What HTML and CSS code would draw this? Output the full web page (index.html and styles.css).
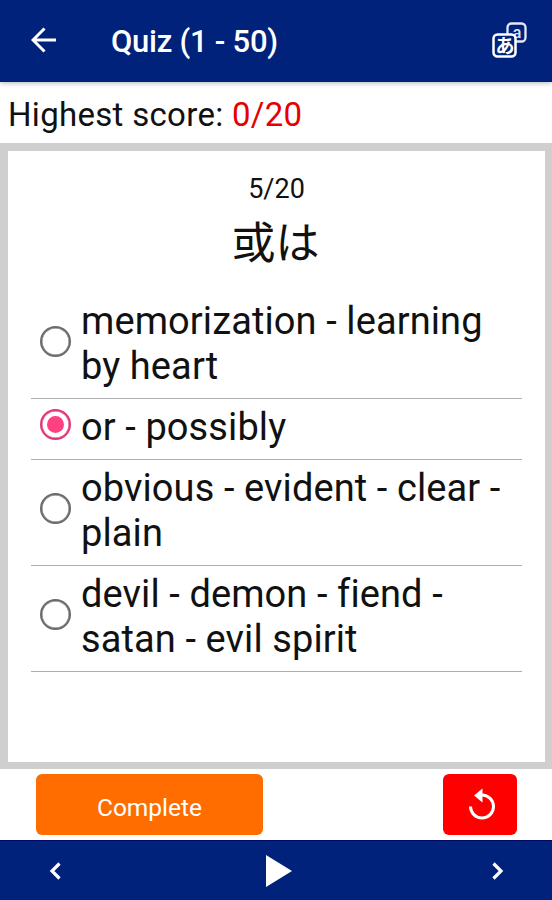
FILE: index.html
```html
<!DOCTYPE html>
<html lang="en">
<head>
<meta charset="utf-8">
<title>Quiz</title>
<link rel="stylesheet" href="styles.css">
</head>
<body>
<header class="topbar">
  <svg class="back" viewBox="0 0 26 26"><path d="M25 13H2M13.500 1.500 2 13 13.500 24.500" fill="none" stroke="#fff" stroke-width="3"/></svg>
  <h1 class="title">Quiz (1 - 50)</h1>
  <svg class="translate" viewBox="0 0 36 36">
    <rect x="15.500" y="1.500" width="18" height="18" rx="4" fill="none" stroke="#e4e8fa" stroke-width="2.300"/>
    <text x="25" y="15.500" class="latin">a</text>
    <rect x="1.500" y="12.500" width="22" height="22" rx="4" fill="#00227b" stroke="#fff" stroke-width="2.500"/>
    <text x="13" y="30.500" class="kana">あ</text>
  </svg>
</header>
<p class="highscore">Highest score: <span class="score">0/20</span></p>
<main class="card">
  <div class="progress">5/20</div>
  <div class="word" lang="ja">或は</div>
  <ul class="options">
    <li class="option"><span class="radio"></span><span class="label">memorization - learning<br>by heart</span></li>
    <li class="option"><span class="radio checked"></span><span class="label">or - possibly</span></li>
    <li class="option"><span class="radio"></span><span class="label">obvious - evident - clear -<br>plain</span></li>
    <li class="option"><span class="radio"></span><span class="label">devil - demon - fiend -<br>satan - evil spirit</span></li>
  </ul>
</main>
<div class="actions">
  <button class="complete">Complete</button>
  <button class="reset" aria-label="Reset">
    <svg class="reset-icon" viewBox="0 0 30 32"><path d="M3.500 18.500A11.500 11.500 0 1 0 15 7H13" fill="none" stroke="#fff" stroke-width="3"/><path d="M15.500 .5V14.500L7 7.500Z" fill="#fff"/></svg>
  </button>
</div>
<nav class="bottombar">
  <svg class="chevron" viewBox="0 0 12 18"><path d="M10.500 1.500 3 9l7.500 7.500" fill="none" stroke="#fff" stroke-width="3.200"/></svg>
  <svg class="play" viewBox="0 0 26 32"><path d="M0 0 26 16 0 32Z" fill="#fff"/></svg>
  <svg class="chevron" viewBox="0 0 12 18"><path d="M1.500 1.500 9 9l-7.500 7.500" fill="none" stroke="#fff" stroke-width="3.200"/></svg>
</nav>
</body>
</html>
```
FILE: styles.css
```css
* { box-sizing: border-box; }
body {
  margin: 0;
  height: 900px;
  display: flex;
  flex-direction: column;
  background: #fff;
  color: #111;
  font-family: Roboto, "Noto Sans CJK JP", sans-serif;
  overflow: hidden;
}
.topbar {
  height: 82px;
  flex: none;
  display: flex;
  align-items: center;
  padding: 0 24px 2px 31px;
  background: #00227b;
  color: #fff;
  box-shadow: 0 1px 5px rgba(0, 0, 0, .3);
}
.back { width: 26px; height: 26px; }
.title {
  margin: 3px auto 0 54px;
  font-size: 31px;
  font-weight: 500;
  letter-spacing: -.25px;
  line-height: 40px;
  white-space: nowrap;
}
.translate { width: 36px; height: 36px; }
.latin, .kana { fill: #fff; text-anchor: middle; font-weight: 500; }
.latin { font-size: 16px; fill: #dde2f5; }
.kana { font-family: "Noto Sans CJK JP", sans-serif; font-size: 19px; font-weight: 700; }
.highscore {
  margin: 0;
  height: 61px;
  padding: 13px 8px 0;
  font-size: 33px;
  letter-spacing: .3px;
  line-height: 40px;
  white-space: nowrap;
}
.score { color: #e60000; }
.card {
  height: 626px;
  flex: none;
  border: 8px solid #cfcfcf;
  border-right-width: 7px;
  border-bottom-width: 7px;
  padding: 22px 23px 0;
}
.progress {
  text-align: center;
  font-size: 27px;
  line-height: 32px;
}
.word {
  text-align: center;
  font-family: "Noto Sans CJK JP", sans-serif;
  font-size: 44px;
  font-weight: 400;
  line-height: 60px;
  height: 88px;
  padding: 5px 2px 0 0;
}
.options { list-style: none; margin: 0; padding: 0; }
.option {
  display: flex;
  align-items: center;
  padding: 6px 0 9px 9px;
  border-bottom: 1px solid #adadad;
}
.radio {
  flex: none;
  width: 31px;
  height: 31px;
  border: 2px solid #6b6b6b;
  box-shadow: inset 0 0 0 .5px #6b6b6b;
  border-radius: 50%;
  margin: -6px 10px 0 0;
  display: flex;
}
.radio.checked { border-color: #e2357a; box-shadow: inset 0 0 0 .5px #e2357a; }
.radio.checked::before {
  content: "";
  width: 17px;
  height: 17px;
  margin: auto;
  border-radius: 50%;
  background: #ff4081;
}
.label {
  font-size: 38px;
  letter-spacing: .1px;
  line-height: 45px;
  white-space: nowrap;
}
.actions {
  height: 71px;
  flex: none;
  display: flex;
  justify-content: space-between;
  padding: 5px 35px 5px 36px;
}
.complete, .reset {
  border: 0;
  border-radius: 6px;
  color: #fff;
  font-family: inherit;
  padding: 0;
}
.complete { width: 227px; background: #ff6d00; font-size: 24.5px; padding-top: 5px; }
.reset {
  width: 74px;
  background: #f00;
  display: flex;
  align-items: center;
  justify-content: center;
}
.reset-icon { width: 30px; height: 32px; margin: -2px 0 0 4px; }
.bottombar {
  flex: 1;
  display: flex;
  align-items: center;
  justify-content: space-between;
  padding: 1px 48px 0 49px;
  background: #00227b;
  border-top: 1px solid #000c63;
}
.chevron { width: 12px; height: 18px; }
.play { width: 26px; height: 32px; margin-left: 5px; }
```
